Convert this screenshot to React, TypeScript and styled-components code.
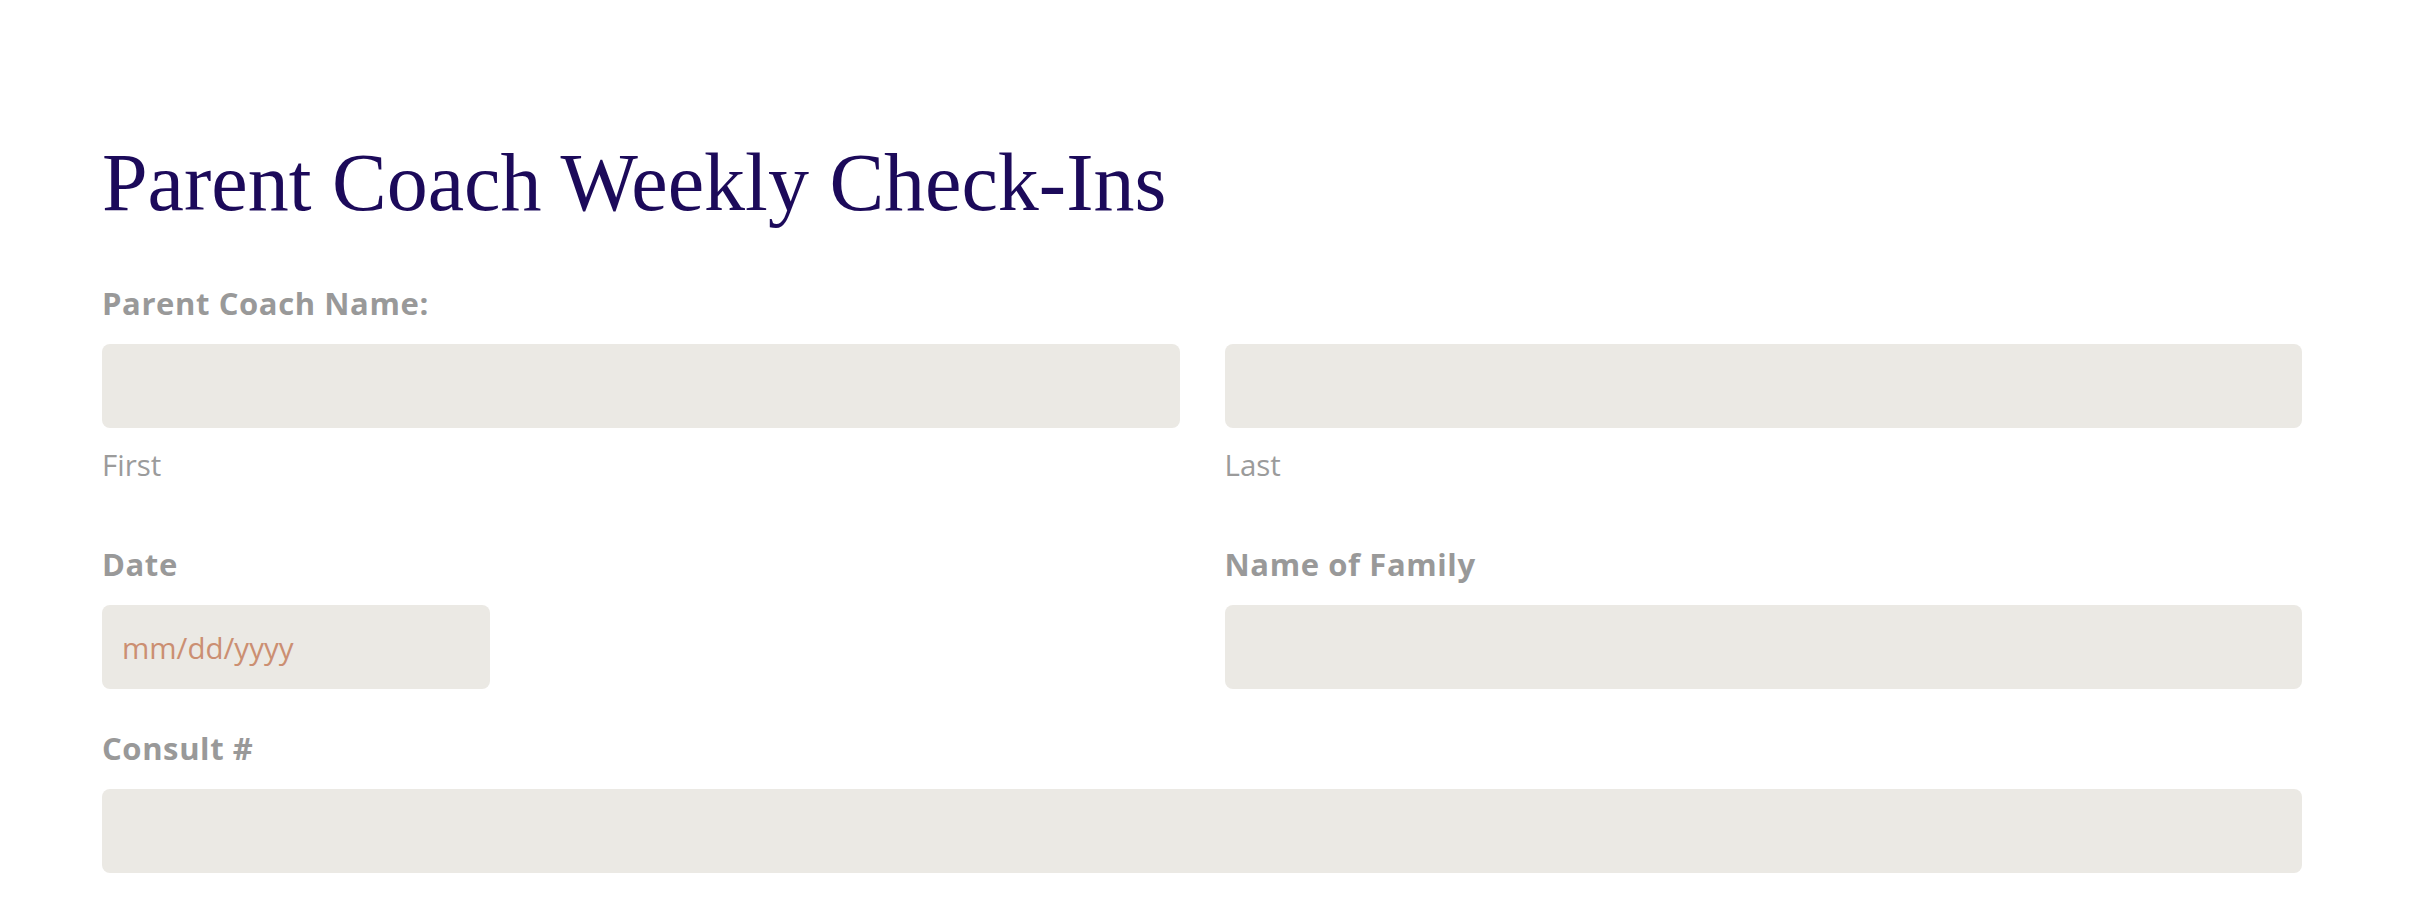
import styled, { createGlobalStyle } from "styled-components";

const GlobalStyle = createGlobalStyle`
  html, body {
    margin: 0;
    padding: 0;
    background: #fff;
  }
  * {
    box-sizing: border-box;
  }
`;

const Page = styled.div`
  width: 2418px;
  min-height: 910px;
  padding: 134px 0 0 102px;
  font-family: "Open Sans", "Liberation Sans", sans-serif;
`;

const Form = styled.form`
  width: 2200px;
  display: flex;
  flex-direction: column;
`;

const Title = styled.h1`
  margin: 0 0 52px;
  font-family: "Liberation Serif", "Times New Roman", serif;
  font-weight: 400;
  font-size: 82px;
  line-height: 97px;
  color: #1c0a5a;
`;

const Row = styled.div<{ $top?: number; $bottom?: number }>`
  display: grid;
  grid-template-columns: 1fr 1fr;
  column-gap: 45px;
  margin-top: ${(p) => p.$top ?? 0}px;
  margin-bottom: ${(p) => p.$bottom ?? 39}px;
`;

const Field = styled.div`
  display: flex;
  flex-direction: column;
`;

const Label = styled.label`
  font-size: 31px;
  font-weight: 700;
  letter-spacing: 0.6px;
  line-height: 40px;
  color: #999999;
  margin-bottom: 21px;
`;

const Input = styled.input<{ $width?: number }>`
  width: ${(p) => (p.$width ? `${p.$width}px` : "100%")};
  height: 84px;
  border: 0;
  border-radius: 8px;
  background: #ebe9e4;
  padding: 0 20px;
  font-family: "Open Sans", "Liberation Sans", sans-serif;
  font-size: 29.5px;
  color: #555;
  outline: none;
  &::placeholder {
    color: #cb8f72;
  }
`;

const SubLabel = styled.span`
  margin: 17px 0 20px;
  font-size: 29.5px;
  font-weight: 400;
  line-height: 40px;
  color: #9b9b9b;
`;

export default function App() {
  return (
    <>
      <GlobalStyle />
      <Page>
        <Form onSubmit={(e) => e.preventDefault()}>
          <Title>Parent Coach Weekly Check-Ins</Title>

          <Field>
            <Label>Parent Coach Name:</Label>
          </Field>
          <Row $bottom={0}>
            <Field>
              <Input type="text" aria-label="First" />
              <SubLabel>First</SubLabel>
            </Field>
            <Field>
              <Input type="text" aria-label="Last" />
              <SubLabel>Last</SubLabel>
            </Field>
          </Row>

          <Row $top={39}>
            <Field>
              <Label>Date</Label>
              <Input type="text" placeholder="mm/dd/yyyy" $width={388} />
            </Field>
            <Field>
              <Label>Name of Family</Label>
              <Input type="text" />
            </Field>
          </Row>

          <Field>
            <Label>Consult #</Label>
            <Input type="text" />
          </Field>
        </Form>
      </Page>
    </>
  );
}
